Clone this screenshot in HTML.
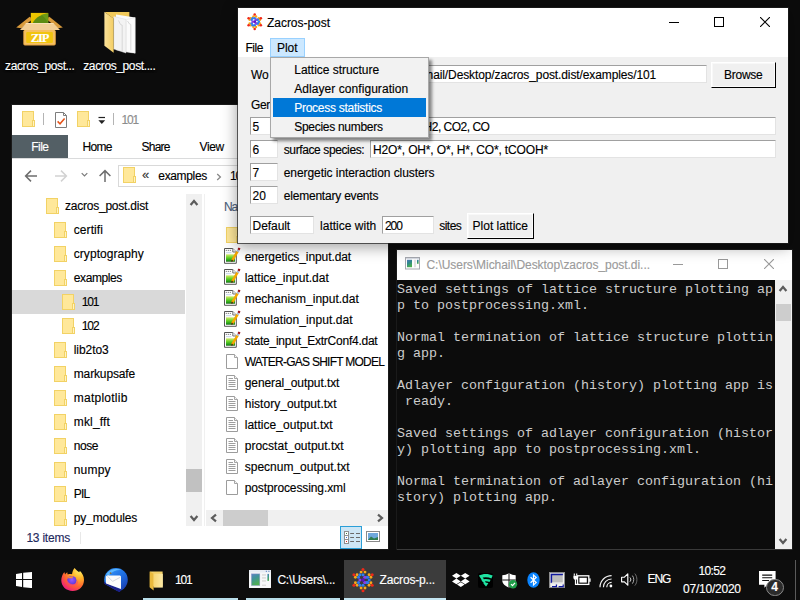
<!DOCTYPE html><html><head><meta charset="utf-8"><title>Zacros-post</title><style>
html,body{margin:0;padding:0}
body{width:800px;height:600px;overflow:hidden;position:relative;background:#0c0c0c;font-family:"Liberation Sans",sans-serif;font-size:12px}
body div,body svg,body span.t{position:absolute}
span.t{white-space:pre;display:block;-webkit-text-stroke:.14px currentColor}
.ent{background:#fff;box-sizing:border-box;border:1px solid;border-color:#a0a0a0 #e3e3e3 #e3e3e3 #a0a0a0}
.btn{background:#f0f0f0;box-sizing:border-box;border:1px solid;border-color:#fff #000 #000 #fff;box-shadow:inset -1px -1px 0 #fbfbfb,inset 1px 1px 0 #f8f8f8}
.con{font-family:"Liberation Mono",monospace;font-size:13.33px;line-height:16px;color:#cccccc;white-space:pre;margin:0}
</style></head><body>
<div id="desktop-icons" style="left:0;top:0">
<svg style="left:16px;top:12px;" width="47" height="35" viewBox="0 0 47 35"><defs><linearGradient id="zc" x1="0" y1="0" x2="1" y2="1"><stop offset="0" stop-color="#f0cc00"/><stop offset="1" stop-color="#e0b400"/></linearGradient></defs><path d="M0.2 15.5L13.6 4.7L16.4 7.2L5.4 16.2Z" fill="#d89a3c"/><path d="M46.8 15.5L33.4 4.7L30.6 7.2L41.6 16.2Z" fill="#d89a3c"/><path d="M13.6 4.7L16.4 7.2H30.6L33.4 4.7L31 10.9H16Z" fill="#c88a30"/><rect x="14.8" y="0.9" width="17.4" height="10.4" fill="url(#zc)"/><path d="M16.6 11.3C19.5 5 26 2.2 32.2 1.3V11.3Z" fill="#5d8c12"/><path d="M25 2.4C28 4.5 30.6 7.6 32.2 11.3V1.2Z" fill="#7aa81a" opacity=".55"/><path d="M10.2 10.9H37.2L44 18H4Z" fill="#f3cf96"/><path d="M10.2 10.9H37.2L38 11.8H9.4Z" fill="#fbe6c0"/><rect x="7.3" y="18" width="32.5" height="15.4" rx="1.6" fill="#e7a544"/><rect x="8.2" y="18" width="30.7" height="14.4" rx="1.2" fill="#f5c060"/><rect x="10.2" y="20" width="26.7" height="11" rx="1.2" fill="#f1c40f"/></svg>
<span class="t" style="left:30.80px;top:31px;font-size:12.5px;line-height:14px;color:#fff;font-family:'Liberation Serif', serif;font-weight:bold;letter-spacing:-1.148px;">ZIP</span>
<span class="t" style="left:5.00px;top:59px;font-size:12px;line-height:14px;color:#fff;letter-spacing:-0.372px;text-shadow:0 1px 2px #000,0 0 3px #000;">zacros_post...</span>
<svg style="left:103.8px;top:11.2px;" width="32" height="43" viewBox="0 0 32 43"><defs><linearGradient id="fy" x1="0" y1="0" x2="1" y2="0"><stop offset="0" stop-color="#fbe29a"/><stop offset="1" stop-color="#f3cd62"/></linearGradient></defs><path d="M0.4 0.9H25.4V6L9.4 7.5Z" fill="#f1c95a"/><path d="M12 3.6L31.2 6.6V42.2L12 39Z" fill="#fafafa"/><path d="M9.8 5.5L22 8.5V42L9.8 38Z" fill="#f3f3f3" stroke="#d8d8d8" stroke-width=".5"/><path d="M22.4 8.6L31.2 6.6V42.2L22.4 41Z" fill="#fbfbfb" stroke="#dcdcdc" stroke-width=".4"/><path d="M14.5 9.5L16.5 13.5L18.2 14.2V40" fill="none" stroke="#cfcfcf" stroke-width=".8"/><path d="M23.5 10L25.5 13L26.8 13.5V39.5" fill="none" stroke="#d0d0d0" stroke-width=".8"/><path d="M0.4 0.9L9.6 7.6V41.8L0.4 34.7Z" fill="url(#fy)"/></svg>
<span class="t" style="left:83.25px;top:59px;font-size:12px;line-height:14px;color:#fff;letter-spacing:-0.386px;text-shadow:0 1px 2px #000,0 0 3px #000;">zacros_post....</span>
</div>
<div id="explorer-window" style="left:0;top:0">
<div style="left:12px;top:105px;width:376px;height:444px;background:#fff;box-shadow:0 0 0 1px #1a1a1a"></div>
<svg style="left:22px;top:111px;" width="13" height="16" viewBox="0 0 13 16"><rect x=".5" y=".5" width="11" height="15" fill="#ffe89a" stroke="#f2d265"/><rect x="10.5" y="9.5" width="2" height="6" fill="#fff3c4" stroke="#f2d265"/></svg>
<div style="left:43px;top:113px;width:1px;height:12px;background:#b4b4b4"></div>
<svg style="left:55px;top:112px;" width="13" height="16" viewBox="0 0 13 16"><path d="M.5 .5H8.5L11.5 3.5V15.5H.5Z" fill="#fff" stroke="#7d7d7d"/><path d="M8.5 .5V3.5H11.5" fill="none" stroke="#7d7d7d"/><path d="M2.6 9.4L5 11.8L9.6 6.4" fill="none" stroke="#e5531a" stroke-width="1.5"/></svg>
<svg style="left:77px;top:111px;" width="13" height="16" viewBox="0 0 13 16"><rect x=".5" y=".5" width="11" height="15" fill="#ffe89a" stroke="#f2d265"/><rect x="10.5" y="9.5" width="2" height="6" fill="#fff3c4" stroke="#f2d265"/></svg>
<svg style="left:98px;top:116px;" width="8" height="9" viewBox="0 0 8 9"><path d="M.5 1.5H7" stroke="#222" stroke-width="1.2"/><path d="M.4 4.2H7.2L3.8 8Z" fill="#222"/></svg>
<div style="left:113px;top:113px;width:1px;height:12px;background:#b4b4b4"></div>
<span class="t" style="left:121.40px;top:113px;font-size:12px;line-height:14px;color:#8c8c8c;letter-spacing:-1.077px;">101</span>
<div style="left:12px;top:135px;width:56px;height:23px;background:#535f65"></div>
<span class="t" style="left:31.30px;top:140px;font-size:12px;line-height:14px;color:#fff;letter-spacing:-0.536px;">File</span>
<span class="t" style="left:82.50px;top:140px;font-size:12px;line-height:14px;color:#000;letter-spacing:-0.654px;">Home</span>
<span class="t" style="left:141.50px;top:140px;font-size:12px;line-height:14px;color:#000;letter-spacing:-0.766px;">Share</span>
<span class="t" style="left:199.50px;top:140px;font-size:12px;line-height:14px;color:#000;letter-spacing:-0.349px;">View</span>
<div style="left:12px;top:158px;width:376px;height:1px;background:#dadbdc"></div>
<svg style="left:24px;top:169px;" width="14" height="14" viewBox="0 0 14 14"><path d="M13 7H1.8M7 1.6L1.6 7L7 12.4" fill="none" stroke="#6d6d6d" stroke-width="1.5"/></svg>
<svg style="left:54px;top:169px;" width="14" height="14" viewBox="0 0 14 14"><path d="M1 7H12.2M7 1.6L12.4 7L7 12.4" fill="none" stroke="#d2d2d2" stroke-width="1.5"/></svg>
<svg style="left:81px;top:172px;" width="7" height="6" viewBox="0 0 7 6"><path d="M.7 1.2L3.5 4L6.3 1.2" fill="none" stroke="#7a7a7a" stroke-width="1.2"/></svg>
<svg style="left:98px;top:169px;" width="14" height="14" viewBox="0 0 14 14"><path d="M7 13V1.8M1.6 7L7 1.6L12.4 7" fill="none" stroke="#6d6d6d" stroke-width="1.5"/></svg>
<div style="left:118px;top:165px;width:260px;height:22px;box-sizing:border-box;border:1px solid #d9d9d9;background:#fff"></div>
<svg style="left:123px;top:167px;" width="13" height="16" viewBox="0 0 13 16"><rect x=".5" y=".5" width="11" height="15" fill="#ffe89a" stroke="#f2d265"/><rect x="10.5" y="9.5" width="2" height="6" fill="#fff3c4" stroke="#f2d265"/></svg>
<span class="t" style="left:142.00px;top:167px;font-size:13px;line-height:15px;color:#333;">«</span>
<span class="t" style="left:158.30px;top:169px;font-size:12px;line-height:14px;color:#000;letter-spacing:-0.345px;">examples</span>
<svg style="left:215.5px;top:172.5px;" width="6" height="8" viewBox="0 0 6 8"><path d="M1.2 1L4.4 4L1.2 7" fill="none" stroke="#888" stroke-width="1.3"/></svg>
<span class="t" style="left:229.90px;top:169px;font-size:12px;line-height:14px;color:#000;letter-spacing:-1.077px;">101</span>
<div style="left:12px;top:290px;width:173px;height:24px;background:#d9d9d9"></div>
<svg style="left:46px;top:198px;" width="13" height="16" viewBox="0 0 13 16"><rect x=".5" y=".5" width="11" height="15" fill="#ffe89a" stroke="#f2d265"/><rect x="10.5" y="9.5" width="2" height="6" fill="#fff3c4" stroke="#f2d265"/></svg>
<span class="t" style="left:65.00px;top:199px;font-size:12px;line-height:14px;color:#000;letter-spacing:-0.232px;">zacros_post.dist</span>
<svg style="left:54px;top:222px;" width="13" height="16" viewBox="0 0 13 16"><rect x=".5" y=".5" width="11" height="15" fill="#ffe89a" stroke="#f2d265"/><rect x="10.5" y="9.5" width="2" height="6" fill="#fff3c4" stroke="#f2d265"/></svg>
<span class="t" style="left:73.75px;top:223px;font-size:12px;line-height:14px;color:#000;letter-spacing:0.090px;">certifi</span>
<svg style="left:54px;top:246px;" width="13" height="16" viewBox="0 0 13 16"><rect x=".5" y=".5" width="11" height="15" fill="#ffe89a" stroke="#f2d265"/><rect x="10.5" y="9.5" width="2" height="6" fill="#fff3c4" stroke="#f2d265"/></svg>
<span class="t" style="left:73.75px;top:247px;font-size:12px;line-height:14px;color:#000;letter-spacing:0.052px;">cryptography</span>
<svg style="left:54px;top:270px;" width="13" height="16" viewBox="0 0 13 16"><rect x=".5" y=".5" width="11" height="15" fill="#ffe89a" stroke="#f2d265"/><rect x="10.5" y="9.5" width="2" height="6" fill="#fff3c4" stroke="#f2d265"/></svg>
<span class="t" style="left:73.75px;top:271px;font-size:12px;line-height:14px;color:#000;letter-spacing:-0.395px;">examples</span>
<svg style="left:62px;top:294px;" width="13" height="16" viewBox="0 0 13 16"><rect x=".5" y=".5" width="11" height="15" fill="#ffe89a" stroke="#f2d265"/><rect x="10.5" y="9.5" width="2" height="6" fill="#fff3c4" stroke="#f2d265"/></svg>
<span class="t" style="left:81.75px;top:295px;font-size:12px;line-height:14px;color:#000;letter-spacing:-1.210px;">101</span>
<svg style="left:62px;top:318px;" width="13" height="16" viewBox="0 0 13 16"><rect x=".5" y=".5" width="11" height="15" fill="#ffe89a" stroke="#f2d265"/><rect x="10.5" y="9.5" width="2" height="6" fill="#fff3c4" stroke="#f2d265"/></svg>
<span class="t" style="left:81.75px;top:319px;font-size:12px;line-height:14px;color:#000;letter-spacing:-1.077px;">102</span>
<svg style="left:54px;top:342px;" width="13" height="16" viewBox="0 0 13 16"><rect x=".5" y=".5" width="11" height="15" fill="#ffe89a" stroke="#f2d265"/><rect x="10.5" y="9.5" width="2" height="6" fill="#fff3c4" stroke="#f2d265"/></svg>
<span class="t" style="left:73.75px;top:343px;font-size:12px;line-height:14px;color:#000;letter-spacing:-0.054px;">lib2to3</span>
<svg style="left:54px;top:366px;" width="13" height="16" viewBox="0 0 13 16"><rect x=".5" y=".5" width="11" height="15" fill="#ffe89a" stroke="#f2d265"/><rect x="10.5" y="9.5" width="2" height="6" fill="#fff3c4" stroke="#f2d265"/></svg>
<span class="t" style="left:73.75px;top:367px;font-size:12px;line-height:14px;color:#000;letter-spacing:-0.140px;">markupsafe</span>
<svg style="left:54px;top:390px;" width="13" height="16" viewBox="0 0 13 16"><rect x=".5" y=".5" width="11" height="15" fill="#ffe89a" stroke="#f2d265"/><rect x="10.5" y="9.5" width="2" height="6" fill="#fff3c4" stroke="#f2d265"/></svg>
<span class="t" style="left:73.75px;top:391px;font-size:12px;line-height:14px;color:#000;letter-spacing:0.244px;">matplotlib</span>
<svg style="left:54px;top:414px;" width="13" height="16" viewBox="0 0 13 16"><rect x=".5" y=".5" width="11" height="15" fill="#ffe89a" stroke="#f2d265"/><rect x="10.5" y="9.5" width="2" height="6" fill="#fff3c4" stroke="#f2d265"/></svg>
<span class="t" style="left:73.75px;top:415px;font-size:12px;line-height:14px;color:#000;letter-spacing:0.168px;">mkl_fft</span>
<svg style="left:54px;top:438px;" width="13" height="16" viewBox="0 0 13 16"><rect x=".5" y=".5" width="11" height="15" fill="#ffe89a" stroke="#f2d265"/><rect x="10.5" y="9.5" width="2" height="6" fill="#fff3c4" stroke="#f2d265"/></svg>
<span class="t" style="left:73.75px;top:439px;font-size:12px;line-height:14px;color:#000;letter-spacing:-0.433px;">nose</span>
<svg style="left:54px;top:462px;" width="13" height="16" viewBox="0 0 13 16"><rect x=".5" y=".5" width="11" height="15" fill="#ffe89a" stroke="#f2d265"/><rect x="10.5" y="9.5" width="2" height="6" fill="#fff3c4" stroke="#f2d265"/></svg>
<span class="t" style="left:73.75px;top:463px;font-size:12px;line-height:14px;color:#000;letter-spacing:0.194px;">numpy</span>
<svg style="left:54px;top:486px;" width="13" height="16" viewBox="0 0 13 16"><rect x=".5" y=".5" width="11" height="15" fill="#ffe89a" stroke="#f2d265"/><rect x="10.5" y="9.5" width="2" height="6" fill="#fff3c4" stroke="#f2d265"/></svg>
<span class="t" style="left:73.75px;top:487px;font-size:12px;line-height:14px;color:#000;letter-spacing:-0.805px;">PIL</span>
<svg style="left:54px;top:510px;" width="13" height="16" viewBox="0 0 13 16"><rect x=".5" y=".5" width="11" height="15" fill="#ffe89a" stroke="#f2d265"/><rect x="10.5" y="9.5" width="2" height="6" fill="#fff3c4" stroke="#f2d265"/></svg>
<span class="t" style="left:73.75px;top:511px;font-size:12px;line-height:14px;color:#000;letter-spacing:-0.132px;">py_modules</span>
<div style="left:186px;top:194px;width:16px;height:332px;background:#f0f0f0"></div>
<svg style="left:187.8px;top:197px;" width="12" height="12" viewBox="-6 -6 12 12"><path d="M-3.4 2.0L0 -2.0L3.4 2.0" fill="none" stroke="#5c5c5c" stroke-width="2.2"/></svg>
<svg style="left:187.6px;top:511.5px;" width="12" height="12" viewBox="-6 -6 12 12"><path d="M-3.4 -2.0L0 2.0L3.4 -2.0" fill="none" stroke="#5c5c5c" stroke-width="2.2"/></svg>
<div style="left:186px;top:469px;width:16px;height:23px;background:#c1c1c1"></div>
<div style="left:204px;top:194px;width:1px;height:332px;background:#f0f0f0"></div>
<span class="t" style="left:224.00px;top:200px;font-size:12px;line-height:14px;color:#4c607a;letter-spacing:-1.072px;">Na</span>
<svg style="left:226px;top:227px;" width="13" height="16" viewBox="0 0 13 16"><rect x=".5" y=".5" width="11" height="15" fill="#ffe89a" stroke="#f2d265"/><rect x="10.5" y="9.5" width="2" height="6" fill="#fff3c4" stroke="#f2d265"/></svg>
<svg style="left:224px;top:248.0px;overflow:visible;" width="17" height="16" viewBox="0 0 17 16"><defs><linearGradient id="dg248" x1="0" y1="0" x2="0" y2="1"><stop offset="0" stop-color="#d4ea70"/><stop offset=".45" stop-color="#66d226"/><stop offset=".85" stop-color="#22981a"/><stop offset="1" stop-color="#14600e"/></linearGradient></defs><path d="M.5 .5H8.8L12.3 4V15.3H.5Z" fill="#fff" stroke="#555"/><path d="M8.8 .5V4H12.3" fill="#f2f2f2" stroke="#666" stroke-width=".9"/><circle cx="2.3" cy="2.3" r=".6" fill="#666"/><circle cx="4.3" cy="2.3" r=".6" fill="#666"/><circle cx="6.3" cy="2.3" r=".6" fill="#666"/><path d="M2 4.7H7.4" stroke="#bcd0e4" stroke-width=".9"/><rect x="2" y="6.3" width="9" height="7.4" fill="url(#dg248)"/><path d="M8.3 12.3L13.6 3.4" stroke="#f5a800" stroke-width="2.5"/><path d="M7.5 13.6L8.5 11.9" stroke="#5a3a14" stroke-width="1.6"/><path d="M13.5 3.6L14.4 2.1" stroke="#a8bcd6" stroke-width="2.4"/><rect x="13.9" y="-.2" width="2.2" height="2.2" fill="#9c0c14" transform="rotate(30 15 .9)"/></svg>
<span class="t" style="left:244.70px;top:250px;font-size:12px;line-height:14px;color:#000;letter-spacing:-0.084px;">energetics_input.dat</span>
<svg style="left:224px;top:269.0px;overflow:visible;" width="17" height="16" viewBox="0 0 17 16"><defs><linearGradient id="dg269" x1="0" y1="0" x2="0" y2="1"><stop offset="0" stop-color="#d4ea70"/><stop offset=".45" stop-color="#66d226"/><stop offset=".85" stop-color="#22981a"/><stop offset="1" stop-color="#14600e"/></linearGradient></defs><path d="M.5 .5H8.8L12.3 4V15.3H.5Z" fill="#fff" stroke="#555"/><path d="M8.8 .5V4H12.3" fill="#f2f2f2" stroke="#666" stroke-width=".9"/><circle cx="2.3" cy="2.3" r=".6" fill="#666"/><circle cx="4.3" cy="2.3" r=".6" fill="#666"/><circle cx="6.3" cy="2.3" r=".6" fill="#666"/><path d="M2 4.7H7.4" stroke="#bcd0e4" stroke-width=".9"/><rect x="2" y="6.3" width="9" height="7.4" fill="url(#dg269)"/><path d="M8.3 12.3L13.6 3.4" stroke="#f5a800" stroke-width="2.5"/><path d="M7.5 13.6L8.5 11.9" stroke="#5a3a14" stroke-width="1.6"/><path d="M13.5 3.6L14.4 2.1" stroke="#a8bcd6" stroke-width="2.4"/><rect x="13.9" y="-.2" width="2.2" height="2.2" fill="#9c0c14" transform="rotate(30 15 .9)"/></svg>
<span class="t" style="left:244.70px;top:271px;font-size:12px;line-height:14px;color:#000;">lattice_input.dat</span>
<svg style="left:224px;top:290.0px;overflow:visible;" width="17" height="16" viewBox="0 0 17 16"><defs><linearGradient id="dg290" x1="0" y1="0" x2="0" y2="1"><stop offset="0" stop-color="#d4ea70"/><stop offset=".45" stop-color="#66d226"/><stop offset=".85" stop-color="#22981a"/><stop offset="1" stop-color="#14600e"/></linearGradient></defs><path d="M.5 .5H8.8L12.3 4V15.3H.5Z" fill="#fff" stroke="#555"/><path d="M8.8 .5V4H12.3" fill="#f2f2f2" stroke="#666" stroke-width=".9"/><circle cx="2.3" cy="2.3" r=".6" fill="#666"/><circle cx="4.3" cy="2.3" r=".6" fill="#666"/><circle cx="6.3" cy="2.3" r=".6" fill="#666"/><path d="M2 4.7H7.4" stroke="#bcd0e4" stroke-width=".9"/><rect x="2" y="6.3" width="9" height="7.4" fill="url(#dg290)"/><path d="M8.3 12.3L13.6 3.4" stroke="#f5a800" stroke-width="2.5"/><path d="M7.5 13.6L8.5 11.9" stroke="#5a3a14" stroke-width="1.6"/><path d="M13.5 3.6L14.4 2.1" stroke="#a8bcd6" stroke-width="2.4"/><rect x="13.9" y="-.2" width="2.2" height="2.2" fill="#9c0c14" transform="rotate(30 15 .9)"/></svg>
<span class="t" style="left:244.70px;top:292px;font-size:12px;line-height:14px;color:#000;">mechanism_input.dat</span>
<svg style="left:224px;top:311.0px;overflow:visible;" width="17" height="16" viewBox="0 0 17 16"><defs><linearGradient id="dg311" x1="0" y1="0" x2="0" y2="1"><stop offset="0" stop-color="#d4ea70"/><stop offset=".45" stop-color="#66d226"/><stop offset=".85" stop-color="#22981a"/><stop offset="1" stop-color="#14600e"/></linearGradient></defs><path d="M.5 .5H8.8L12.3 4V15.3H.5Z" fill="#fff" stroke="#555"/><path d="M8.8 .5V4H12.3" fill="#f2f2f2" stroke="#666" stroke-width=".9"/><circle cx="2.3" cy="2.3" r=".6" fill="#666"/><circle cx="4.3" cy="2.3" r=".6" fill="#666"/><circle cx="6.3" cy="2.3" r=".6" fill="#666"/><path d="M2 4.7H7.4" stroke="#bcd0e4" stroke-width=".9"/><rect x="2" y="6.3" width="9" height="7.4" fill="url(#dg311)"/><path d="M8.3 12.3L13.6 3.4" stroke="#f5a800" stroke-width="2.5"/><path d="M7.5 13.6L8.5 11.9" stroke="#5a3a14" stroke-width="1.6"/><path d="M13.5 3.6L14.4 2.1" stroke="#a8bcd6" stroke-width="2.4"/><rect x="13.9" y="-.2" width="2.2" height="2.2" fill="#9c0c14" transform="rotate(30 15 .9)"/></svg>
<span class="t" style="left:244.70px;top:313px;font-size:12px;line-height:14px;color:#000;letter-spacing:0.063px;">simulation_input.dat</span>
<svg style="left:224px;top:332.0px;overflow:visible;" width="17" height="16" viewBox="0 0 17 16"><defs><linearGradient id="dg332" x1="0" y1="0" x2="0" y2="1"><stop offset="0" stop-color="#d4ea70"/><stop offset=".45" stop-color="#66d226"/><stop offset=".85" stop-color="#22981a"/><stop offset="1" stop-color="#14600e"/></linearGradient></defs><path d="M.5 .5H8.8L12.3 4V15.3H.5Z" fill="#fff" stroke="#555"/><path d="M8.8 .5V4H12.3" fill="#f2f2f2" stroke="#666" stroke-width=".9"/><circle cx="2.3" cy="2.3" r=".6" fill="#666"/><circle cx="4.3" cy="2.3" r=".6" fill="#666"/><circle cx="6.3" cy="2.3" r=".6" fill="#666"/><path d="M2 4.7H7.4" stroke="#bcd0e4" stroke-width=".9"/><rect x="2" y="6.3" width="9" height="7.4" fill="url(#dg332)"/><path d="M8.3 12.3L13.6 3.4" stroke="#f5a800" stroke-width="2.5"/><path d="M7.5 13.6L8.5 11.9" stroke="#5a3a14" stroke-width="1.6"/><path d="M13.5 3.6L14.4 2.1" stroke="#a8bcd6" stroke-width="2.4"/><rect x="13.9" y="-.2" width="2.2" height="2.2" fill="#9c0c14" transform="rotate(30 15 .9)"/></svg>
<span class="t" style="left:244.70px;top:334px;font-size:12px;line-height:14px;color:#000;letter-spacing:-0.239px;">state_input_ExtrConf4.dat</span>
<svg style="left:226px;top:354.0px;" width="12" height="15" viewBox="0 0 12 15"><path d="M.5 .5H8.5L11.5 3.5V14.5H.5Z" fill="#fff" stroke="#9c9c9c"/><path d="M8.5 .5V3.5H11.5" fill="#f4f4f4" stroke="#9c9c9c" stroke-width=".9"/></svg>
<span class="t" style="left:244.70px;top:355px;font-size:12px;line-height:14px;color:#000;letter-spacing:-0.744px;">WATER-GAS SHIFT MODEL</span>
<svg style="left:226px;top:375.0px;" width="12" height="15" viewBox="0 0 12 15"><path d="M.5 .5H8.5L11.5 3.5V14.5H.5Z" fill="#fff" stroke="#9c9c9c"/><path d="M8.5 .5V3.5H11.5" fill="#f4f4f4" stroke="#9c9c9c" stroke-width=".9"/><path d="M2.5 3.5H7" stroke="#9e9e9e" stroke-width="1"/><path d="M2.5 5.5H9.5" stroke="#9e9e9e" stroke-width="1"/><path d="M2.5 7.5H9.5" stroke="#9e9e9e" stroke-width="1"/><path d="M2.5 9.5H9.5" stroke="#9e9e9e" stroke-width="1"/><path d="M2.5 11.5H9.5" stroke="#9e9e9e" stroke-width="1"/></svg>
<span class="t" style="left:244.70px;top:376px;font-size:12px;line-height:14px;color:#000;letter-spacing:-0.077px;">general_output.txt</span>
<svg style="left:226px;top:396.0px;" width="12" height="15" viewBox="0 0 12 15"><path d="M.5 .5H8.5L11.5 3.5V14.5H.5Z" fill="#fff" stroke="#9c9c9c"/><path d="M8.5 .5V3.5H11.5" fill="#f4f4f4" stroke="#9c9c9c" stroke-width=".9"/><path d="M2.5 3.5H7" stroke="#9e9e9e" stroke-width="1"/><path d="M2.5 5.5H9.5" stroke="#9e9e9e" stroke-width="1"/><path d="M2.5 7.5H9.5" stroke="#9e9e9e" stroke-width="1"/><path d="M2.5 9.5H9.5" stroke="#9e9e9e" stroke-width="1"/><path d="M2.5 11.5H9.5" stroke="#9e9e9e" stroke-width="1"/></svg>
<span class="t" style="left:244.70px;top:397px;font-size:12px;line-height:14px;color:#000;letter-spacing:0.023px;">history_output.txt</span>
<svg style="left:226px;top:417.0px;" width="12" height="15" viewBox="0 0 12 15"><path d="M.5 .5H8.5L11.5 3.5V14.5H.5Z" fill="#fff" stroke="#9c9c9c"/><path d="M8.5 .5V3.5H11.5" fill="#f4f4f4" stroke="#9c9c9c" stroke-width=".9"/><path d="M2.5 3.5H7" stroke="#9e9e9e" stroke-width="1"/><path d="M2.5 5.5H9.5" stroke="#9e9e9e" stroke-width="1"/><path d="M2.5 7.5H9.5" stroke="#9e9e9e" stroke-width="1"/><path d="M2.5 9.5H9.5" stroke="#9e9e9e" stroke-width="1"/><path d="M2.5 11.5H9.5" stroke="#9e9e9e" stroke-width="1"/></svg>
<span class="t" style="left:244.70px;top:418px;font-size:12px;line-height:14px;color:#000;letter-spacing:0.034px;">lattice_output.txt</span>
<svg style="left:226px;top:438.0px;" width="12" height="15" viewBox="0 0 12 15"><path d="M.5 .5H8.5L11.5 3.5V14.5H.5Z" fill="#fff" stroke="#9c9c9c"/><path d="M8.5 .5V3.5H11.5" fill="#f4f4f4" stroke="#9c9c9c" stroke-width=".9"/><path d="M2.5 3.5H7" stroke="#9e9e9e" stroke-width="1"/><path d="M2.5 5.5H9.5" stroke="#9e9e9e" stroke-width="1"/><path d="M2.5 7.5H9.5" stroke="#9e9e9e" stroke-width="1"/><path d="M2.5 9.5H9.5" stroke="#9e9e9e" stroke-width="1"/><path d="M2.5 11.5H9.5" stroke="#9e9e9e" stroke-width="1"/></svg>
<span class="t" style="left:244.70px;top:439px;font-size:12px;line-height:14px;color:#000;letter-spacing:0.014px;">procstat_output.txt</span>
<svg style="left:226px;top:459.0px;" width="12" height="15" viewBox="0 0 12 15"><path d="M.5 .5H8.5L11.5 3.5V14.5H.5Z" fill="#fff" stroke="#9c9c9c"/><path d="M8.5 .5V3.5H11.5" fill="#f4f4f4" stroke="#9c9c9c" stroke-width=".9"/><path d="M2.5 3.5H7" stroke="#9e9e9e" stroke-width="1"/><path d="M2.5 5.5H9.5" stroke="#9e9e9e" stroke-width="1"/><path d="M2.5 7.5H9.5" stroke="#9e9e9e" stroke-width="1"/><path d="M2.5 9.5H9.5" stroke="#9e9e9e" stroke-width="1"/><path d="M2.5 11.5H9.5" stroke="#9e9e9e" stroke-width="1"/></svg>
<span class="t" style="left:244.70px;top:460px;font-size:12px;line-height:14px;color:#000;letter-spacing:0.009px;">specnum_output.txt</span>
<svg style="left:226px;top:480.0px;" width="12" height="15" viewBox="0 0 12 15"><path d="M.5 .5H8.5L11.5 3.5V14.5H.5Z" fill="#fff" stroke="#9c9c9c"/><path d="M8.5 .5V3.5H11.5" fill="#f4f4f4" stroke="#9c9c9c" stroke-width=".9"/></svg>
<span class="t" style="left:244.70px;top:481px;font-size:12px;line-height:14px;color:#000;letter-spacing:-0.107px;">postprocessing.xml</span>
<div style="left:206px;top:510px;width:182px;height:16px;background:#f0f0f0"></div>
<svg style="left:208px;top:511.79999999999995px;" width="12" height="12" viewBox="-6 -6 12 12"><path d="M2.0 -3.4L-2.0 0L2.0 3.4" fill="none" stroke="#5c5c5c" stroke-width="2.2"/></svg>
<svg style="left:374px;top:511.79999999999995px;" width="12" height="12" viewBox="-6 -6 12 12"><path d="M-2.0 -3.4L2.0 0L-2.0 3.4" fill="none" stroke="#5c5c5c" stroke-width="2.2"/></svg>
<div style="left:223px;top:510px;width:45px;height:16px;background:#cdcdcd"></div>
<span class="t" style="left:26.40px;top:531px;font-size:12px;line-height:14px;color:#1f2a5e;letter-spacing:-0.220px;">13 items</span>
<div style="left:80px;top:532px;width:1px;height:12px;background:#e8e8e8"></div>
<div style="left:340px;top:526px;width:22px;height:23px;box-sizing:border-box;background:#cde6f5;border:1px solid #2a9fd8"></div>
<svg style="left:344px;top:531px;" width="16.5" height="13" viewBox="0 0 16.5 13"><rect x=".5" y=".5" width="4" height="12" fill="#fff" stroke="#8f8f8f"/><path d="M.5 4.5H4.5M.5 8.5H4.5" stroke="#8f8f8f"/><rect x="2" y="2.0" width="1" height="1" fill="#3a7d44"/><path d="M6.2 2.5H10M12 2.5H16" stroke="#6a6a6a" stroke-width="1.1"/><rect x="2" y="6.0" width="1" height="1" fill="#3a6fd8"/><path d="M6.2 6.5H10M12 6.5H16" stroke="#6a6a6a" stroke-width="1.1"/><rect x="2" y="10.0" width="1" height="1" fill="#d82a20"/><path d="M6.2 10.5H10M12 10.5H16" stroke="#6a6a6a" stroke-width="1.1"/></svg>
<svg style="left:366px;top:531px;" width="14" height="11" viewBox="0 0 14 11"><rect x=".5" y=".5" width="13" height="10" fill="#fff" stroke="#8a8a8a"/><rect x="2" y="2" width="10" height="7" fill="#6fa8dc"/><path d="M2 9L5 5.5L8 7.5L12 6V9Z" fill="#2e7d4f"/></svg>
</div>
<div id="console-window" style="left:0;top:0">
<div style="left:397px;top:250px;width:395px;height:299px;background:#0c0c0c;box-shadow:0 0 0 1px #1a1a1a"></div>
<div style="left:397px;top:549px;width:395px;height:1px;background:#3a3a3a"></div>
<div style="left:397px;top:250px;width:395px;height:30px;background:#fff"></div>
<svg style="left:405px;top:257.3px;" width="15" height="12.5" viewBox="0 0 15 12.5"><defs><linearGradient id="gs" x1="0" y1="0" x2="0.4" y2="1"><stop offset="0" stop-color="#4f78bd"/><stop offset="0.5" stop-color="#2f8a8c"/><stop offset="1" stop-color="#4aae4e"/></linearGradient></defs><rect x=".5" y=".5" width="14" height="11.5" fill="#fdfdfd" stroke="#a6a9b0"/><rect x="1" y="1" width="13" height="1" fill="#d7dbe3"/><rect x="2" y="2.8" width="5" height="7.4" fill="url(#gs)"/><rect x="9" y="2.8" width="2" height="7.4" fill="#e2e2e2"/><rect x="12" y="2.8" width="1.6" height="4" fill="url(#gs)"/></svg>
<span class="t" style="left:426.50px;top:258px;font-size:12px;line-height:14px;color:#9b9b9b;letter-spacing:-0.046px;">C:\Users\Michail\Desktop\zacros_post.di...</span>
<div style="left:673px;top:264px;width:10px;height:1px;background:#999"></div>
<div style="left:718px;top:259px;width:10px;height:10px;box-sizing:border-box;border:1px solid #999"></div>
<svg style="left:764px;top:259px;" width="10" height="10" viewBox="0 0 10 10"><path d="M0 0L10 10M10 0L0 10" stroke="#999" stroke-width="1.1"/></svg>
<div class="con" style="left:397px;top:282px;width:376px;height:260px">Saved settings of lattice structure plotting ap
p to postprocessing.xml.

Normal termination of lattice structure plottin
g app.

Adlayer configuration (history) plotting app is
 ready.

Saved settings of adlayer configuration (histor
y) plotting app to postprocessing.xml.

Normal termination of adlayer configuration (hi
story) plotting app.</div>
<div style="left:775px;top:280px;width:17px;height:269px;background:#f0f0f0"></div>
<svg style="left:777.4px;top:283.2px;" width="12" height="12" viewBox="-6 -6 12 12"><path d="M-3.4 2.0L0 -2.0L3.4 2.0" fill="none" stroke="#5c5c5c" stroke-width="2.2"/></svg>
<svg style="left:777.4px;top:534.8px;" width="12" height="12" viewBox="-6 -6 12 12"><path d="M-3.4 -2.0L0 2.0L3.4 -2.0" fill="none" stroke="#5c5c5c" stroke-width="2.2"/></svg>
<div style="left:776px;top:304px;width:15px;height:17px;background:#cdcdcd"></div>
</div>
<div id="zacros-window" style="left:0;top:0">
<div style="left:238px;top:8px;width:550px;height:235px;background:#f0f0f0;box-shadow:0 0 0 1px rgba(30,30,30,.7),0 3px 14px 1px rgba(0,0,0,.38)"></div>
<div style="left:238px;top:8px;width:550px;height:49px;background:#fff"></div>
<svg style="left:245.69px;top:13.489999999999998px;" width="17.42" height="17.42" viewBox="-8.71 -8.71 17.42 17.42"><circle cx="-1.27" cy="-5.29" r="1.21" fill="#f8a81a"/><circle cx="1.34" cy="-5.29" r="1.21" fill="#f8a81a"/><circle cx="-1.27" cy="5.36" r="1.21" fill="#f8a81a"/><circle cx="1.34" cy="5.36" r="1.21" fill="#f8a81a"/><circle cx="4.09" cy="-3.48" r="1.21" fill="#f8a81a"/><circle cx="5.29" cy="-1.88" r="1.21" fill="#f8a81a"/><circle cx="-3.95" cy="-3.48" r="1.21" fill="#f8a81a"/><circle cx="-5.09" cy="-1.88" r="1.21" fill="#f8a81a"/><circle cx="4.09" cy="3.55" r="1.21" fill="#f8a81a"/><circle cx="5.29" cy="1.81" r="1.21" fill="#f8a81a"/><circle cx="-3.95" cy="3.55" r="1.21" fill="#f8a81a"/><circle cx="-5.09" cy="1.81" r="1.21" fill="#f8a81a"/><circle cx="0.00" cy="-7.10" r="1.26" fill="#f02818"/><circle cx="0.00" cy="7.24" r="1.26" fill="#f02818"/><circle cx="-6.10" cy="-3.48" r="1.26" fill="#f02818"/><circle cx="6.16" cy="-3.48" r="1.26" fill="#f02818"/><circle cx="-6.10" cy="3.55" r="1.26" fill="#f02818"/><circle cx="6.16" cy="3.55" r="1.26" fill="#f02818"/><circle cx="-2.08" cy="-3.48" r="1.26" fill="#2d7df0"/><circle cx="0.00" cy="-3.48" r="1.26" fill="#2d7df0"/><circle cx="-3.02" cy="-1.88" r="1.26" fill="#2d7df0"/><circle cx="3.15" cy="-1.88" r="1.26" fill="#2d7df0"/><circle cx="4.15" cy="0.00" r="1.26" fill="#2d7df0"/><circle cx="3.15" cy="1.74" r="1.26" fill="#2d7df0"/><circle cx="-3.02" cy="1.74" r="1.26" fill="#2d7df0"/><circle cx="-2.08" cy="3.55" r="1.26" fill="#2d7df0"/><circle cx="0.00" cy="3.55" r="1.26" fill="#2d7df0"/><circle cx="2.14" cy="-1.88" r="1.26" fill="#2d7df0"/><circle cx="2.14" cy="1.74" r="1.26" fill="#2d7df0"/><circle cx="1.14" cy="-1.88" r="1.26" fill="#8a3de8"/><circle cx="-2.08" cy="0.00" r="1.26" fill="#8a3de8"/><circle cx="1.14" cy="1.74" r="1.26" fill="#8a3de8"/><circle cx="0" cy="0" r="1.42" fill="#5a12c8"/></svg>
<span class="t" style="left:267.00px;top:16px;font-size:12px;line-height:14px;color:#000;letter-spacing:-0.033px;">Zacros-post</span>
<div style="left:669px;top:22px;width:10px;height:1px;background:#000"></div>
<div style="left:714px;top:17px;width:10px;height:10px;box-sizing:border-box;border:1px solid #000"></div>
<svg style="left:760px;top:17px;" width="10" height="10" viewBox="0 0 10 10"><path d="M0 0L10 10M10 0L0 10" stroke="#000" stroke-width="1.1"/></svg>
<span class="t" style="left:245.50px;top:41px;font-size:12px;line-height:14px;color:#000;letter-spacing:-0.461px;">File</span>
<div style="left:270px;top:38px;width:35px;height:19px;box-sizing:border-box;background:#cce8ff;border:1px solid #99d1ff"></div>
<span class="t" style="left:277.00px;top:41px;font-size:12px;line-height:14px;color:#000;letter-spacing:-0.047px;">Plot</span>
<span class="t" style="left:251.00px;top:68px;font-size:12px;line-height:14px;color:#000;letter-spacing:-0.098px;">Wo</span>
<div class="ent" style="left:352px;top:65px;width:355px;height:18px"></div>
<span class="t" style="left:426.60px;top:68px;font-size:12px;line-height:14px;color:#000;letter-spacing:-0.108px;">hail/Desktop/zacros_post.dist/examples/101</span>
<div class="btn" style="left:711px;top:62px;width:65px;height:26px"></div>
<span class="t" style="left:724.00px;top:68px;font-size:12px;line-height:14px;color:#000;letter-spacing:-0.253px;">Browse</span>
<span class="t" style="left:251.00px;top:98px;font-size:12px;line-height:14px;color:#000;letter-spacing:-0.339px;">Ger</span>
<div class="ent" style="left:250px;top:117px;width:28px;height:18px"></div>
<span class="t" style="left:252.60px;top:120px;font-size:12px;line-height:14px;color:#000;">5</span>
<div class="ent" style="left:250px;top:140px;width:28px;height:18px"></div>
<span class="t" style="left:252.60px;top:143px;font-size:12px;line-height:14px;color:#000;">6</span>
<div class="ent" style="left:250px;top:163px;width:28px;height:18px"></div>
<span class="t" style="left:252.60px;top:166px;font-size:12px;line-height:14px;color:#000;">7</span>
<div class="ent" style="left:250px;top:186px;width:28px;height:18px"></div>
<span class="t" style="left:252.60px;top:189px;font-size:12px;line-height:14px;color:#000;">20</span>
<div class="ent" style="left:370px;top:117px;width:406px;height:18px"></div>
<span class="t" style="left:423.60px;top:120px;font-size:12px;line-height:14px;color:#000;letter-spacing:-0.505px;">H2, CO2, CO</span>
<span class="t" style="left:283.75px;top:143px;font-size:12px;line-height:14px;color:#000;letter-spacing:-0.389px;">surface species:</span>
<div class="ent" style="left:370px;top:140px;width:406px;height:18px"></div>
<span class="t" style="left:373.00px;top:143px;font-size:12px;line-height:14px;color:#000;letter-spacing:-0.146px;">H2O*, OH*, O*, H*, CO*, tCOOH*</span>
<span class="t" style="left:283.75px;top:166px;font-size:12px;line-height:14px;color:#000;letter-spacing:-0.067px;">energetic interaction clusters</span>
<span class="t" style="left:283.75px;top:189px;font-size:12px;line-height:14px;color:#000;letter-spacing:-0.210px;">elementary events</span>
<div class="ent" style="left:250px;top:216px;width:64px;height:18px"></div>
<span class="t" style="left:252.60px;top:219px;font-size:12px;line-height:14px;color:#000;letter-spacing:-0.076px;">Default</span>
<span class="t" style="left:320.00px;top:219px;font-size:12px;line-height:14px;color:#000;letter-spacing:0.018px;">lattice with</span>
<div class="ent" style="left:382px;top:216px;width:52px;height:18px"></div>
<span class="t" style="left:385.00px;top:219px;font-size:12px;line-height:14px;color:#000;letter-spacing:-1.077px;">200</span>
<span class="t" style="left:439.25px;top:219px;font-size:12px;line-height:14px;color:#000;letter-spacing:-0.537px;">sites</span>
<div class="btn" style="left:467px;top:213px;width:67px;height:26px"></div>
<span class="t" style="left:472.50px;top:219px;font-size:12px;line-height:14px;color:#000;letter-spacing:0.012px;">Plot lattice</span>
</div>
<div id="plot-menu" style="left:0;top:0">
<div style="left:270px;top:57px;width:159px;height:81px;box-sizing:border-box;background:#f2f2f2;border:1px solid #a8a8a8;box-shadow:3px 3px 3px rgba(0,0,0,.45)"></div>
<div style="left:273px;top:98px;width:153px;height:19px;background:#0078d7"></div>
<span class="t" style="left:294.25px;top:63px;font-size:12px;line-height:14px;color:#000;letter-spacing:-0.034px;">Lattice structure</span>
<span class="t" style="left:294.25px;top:82px;font-size:12px;line-height:14px;color:#000;letter-spacing:0.060px;">Adlayer configuration</span>
<span class="t" style="left:294.25px;top:101px;font-size:12px;line-height:14px;color:#fff;letter-spacing:-0.275px;">Process statistics</span>
<span class="t" style="left:294.25px;top:120px;font-size:12px;line-height:14px;color:#000;letter-spacing:-0.288px;">Species numbers</span>
</div>
<div id="taskbar" style="left:0;top:0">
<div style="left:0px;top:560px;width:800px;height:40px;background:#0d0d0d"></div>
<svg style="left:15.8px;top:571.8px;" width="16.6" height="16.4" viewBox="0 0 16.6 16.4"><path d="M0 1.9L6 1V6.9H0Z M7.2 .85L16.5 0V6.9H7.2Z M0 8.1H6V15L0 14.1Z M7.2 8.1H16.5V16.2L7.2 15.15Z" fill="#fff"/></svg>
<svg style="left:60.5px;top:568px;" width="23" height="23" viewBox="0 0 23 23"><defs><radialGradient id="ffg" cx=".8" cy=".1" r="1.15"><stop offset="0" stop-color="#fff36b"/><stop offset=".3" stop-color="#ffb52a"/><stop offset=".62" stop-color="#ff6230"/><stop offset=".86" stop-color="#f0207a"/><stop offset="1" stop-color="#c0179e"/></radialGradient><radialGradient id="ffp" cx=".5" cy=".4" r=".7"><stop offset="0" stop-color="#9a5bff"/><stop offset="1" stop-color="#4b2bd0"/></radialGradient></defs><path d="M13.5 0C15.5 2.2 17 3.5 18.2 4.2C18.6 3.8 18.8 3.3 18.8 2.8C21.4 5.2 23 8.4 23 12C23 18.4 18 23 11.6 23C5.2 23 .3 18.4 .3 12.6C.3 9.4 1.4 6.2 3.4 4C3.5 5 3.8 5.8 4.2 6.4C4.6 5.6 5.4 4.6 6.4 4.2C6.2 5 6.4 5.8 6.8 6.4C8.2 5.8 10 5.9 11 6.2C11.4 3.8 12.2 1.6 13.5 0Z" fill="url(#ffg)"/><circle cx="10.8" cy="12.6" r="4.7" fill="url(#ffp)"/><path d="M6.2 10.4C7.5 8.6 10.5 8 12.6 8.4C11.8 9 11.4 9.6 11.6 10.2C9.5 10.4 8.2 10.2 6.2 10.4Z" fill="#ff8a30"/><path d="M5.8 11C5.2 15.5 8.6 18.6 12.4 18.2C16 17.8 17.8 14.6 17 11.4C16.8 13.8 15 16 12 16.2C9 16.4 6.6 14.2 5.8 11Z" fill="#ff4f5e" opacity=".85"/></svg>
<svg style="left:104px;top:568px;" width="24" height="24" viewBox="0 0 24 24"><defs><linearGradient id="tbg" x1="0.1" y1="0" x2="0.9" y2="1"><stop offset="0" stop-color="#3a9cff"/><stop offset=".5" stop-color="#1e6ee0"/><stop offset="1" stop-color="#1a36a8"/></linearGradient><clipPath id="tbc"><path d="M0 0H24V24H15L0 15.6Z"/></clipPath></defs><g clip-path="url(#tbc)"><circle cx="12" cy="11.8" r="11.8" fill="url(#tbg)"/><path d="M2 6.4C5.4 1.4 12 -.6 17.6 2.2C13 1.6 8.4 3.4 5.4 7Z" fill="#5cb8ff"/><path d="M0 14L17 21.4L16 24H0Z" fill="#1a1e86"/></g><path d="M1.8 8.6C2.6 7.6 3.8 7.2 5 7.4L16 7.4L17 8.4V20.9L2 15.5Z" fill="#fbfbfa"/><path d="M3.4 8.2L8.6 13.4L16.4 9.2" fill="none" stroke="#c9ccd6" stroke-width=".8"/><circle cx="6.6" cy="5.2" r=".9" fill="#8a6a3a"/></svg>
<svg style="left:149px;top:571px;" width="15" height="20" viewBox="0 0 15 20"><defs><linearGradient id="tf" x1="0" y1="0" x2="1" y2="0"><stop offset="0" stop-color="#f7d674"/><stop offset="1" stop-color="#fbe9a6"/></linearGradient></defs><path d="M1 .6H13.6V15.4H3.6Z" fill="#f2cf66"/><path d="M.6 .6L4.6 2.8V19.4L.6 16.2Z" fill="#e9b93c"/><path d="M4.6 2.8H13.8V16.6H4.6Z" fill="url(#tf)"/></svg>
<span class="t" style="left:175.00px;top:573px;font-size:12px;line-height:14px;color:#fff;letter-spacing:-1.210px;">101</span>
<div style="left:143px;top:598px;width:94.5px;height:2px;background:#b9deea"></div>
<svg style="left:249px;top:570.3px;" width="22" height="18.2" viewBox="0 0 22 18"><defs><linearGradient id="ag249" x1="0" y1="0" x2="0.4" y2="1"><stop offset="0" stop-color="#5b82c4"/><stop offset="0.45" stop-color="#3f9498"/><stop offset="1" stop-color="#4fae52"/></linearGradient></defs><rect x="0" y="0" width="22" height="18" rx=".6" fill="#f6f7f9"/><rect x="0" y="0" width="22" height="2.4" fill="#e6ebf3"/><rect x="16.8" y=".7" width="1.2" height="1" fill="#5a7ec0"/><rect x="19.3" y=".7" width="1.2" height="1" fill="#5a7ec0"/><rect x="2.4" y="3.8" width="8.4" height="11.6" fill="url(#ag249)" stroke="#8d97c9" stroke-width=".5"/><rect x="13" y="4" width="4" height="1.6" fill="#dcdcdc"/><rect x="13" y="7" width="4" height="1.6" fill="#dcdcdc"/><rect x="13" y="10" width="4" height="1.6" fill="#dcdcdc"/><rect x="13" y="14.6" width="4" height="1" fill="#d0d0d0"/><rect x="18.4" y="3.8" width="1.6" height="7" fill="url(#ag249)"/></svg>
<span class="t" style="left:277.40px;top:573px;font-size:12px;line-height:14px;color:#fff;letter-spacing:-0.185px;">C:\Users\...</span>
<div style="left:246px;top:598px;width:94px;height:2px;background:#b9deea"></div>
<div style="left:344px;top:560px;width:102px;height:40px;background:#3c3c3c"></div>
<div style="left:344px;top:598px;width:102px;height:2px;background:#c4e6f2"></div>
<svg style="left:349.8px;top:566.8px;" width="26.0" height="26.0" viewBox="-13.0 -13.0 26.0 26.0"><circle cx="-1.90" cy="-7.90" r="1.45" fill="#f8a81a"/><circle cx="2.00" cy="-7.90" r="1.45" fill="#f8a81a"/><circle cx="-1.90" cy="8.00" r="1.45" fill="#f8a81a"/><circle cx="2.00" cy="8.00" r="1.45" fill="#f8a81a"/><circle cx="6.10" cy="-5.20" r="1.45" fill="#f8a81a"/><circle cx="7.90" cy="-2.80" r="1.45" fill="#f8a81a"/><circle cx="-5.90" cy="-5.20" r="1.45" fill="#f8a81a"/><circle cx="-7.60" cy="-2.80" r="1.45" fill="#f8a81a"/><circle cx="6.10" cy="5.30" r="1.45" fill="#f8a81a"/><circle cx="7.90" cy="2.70" r="1.45" fill="#f8a81a"/><circle cx="-5.90" cy="5.30" r="1.45" fill="#f8a81a"/><circle cx="-7.60" cy="2.70" r="1.45" fill="#f8a81a"/><circle cx="0.00" cy="-10.60" r="1.50" fill="#f02818"/><circle cx="0.00" cy="10.80" r="1.50" fill="#f02818"/><circle cx="-9.10" cy="-5.20" r="1.50" fill="#f02818"/><circle cx="9.20" cy="-5.20" r="1.50" fill="#f02818"/><circle cx="-9.10" cy="5.30" r="1.50" fill="#f02818"/><circle cx="9.20" cy="5.30" r="1.50" fill="#f02818"/><circle cx="-3.10" cy="-5.20" r="1.50" fill="#2d7df0"/><circle cx="0.00" cy="-5.20" r="1.50" fill="#2d7df0"/><circle cx="-4.50" cy="-2.80" r="1.50" fill="#2d7df0"/><circle cx="4.70" cy="-2.80" r="1.50" fill="#2d7df0"/><circle cx="6.20" cy="0.00" r="1.50" fill="#2d7df0"/><circle cx="4.70" cy="2.60" r="1.50" fill="#2d7df0"/><circle cx="-4.50" cy="2.60" r="1.50" fill="#2d7df0"/><circle cx="-3.10" cy="5.30" r="1.50" fill="#2d7df0"/><circle cx="0.00" cy="5.30" r="1.50" fill="#2d7df0"/><circle cx="3.20" cy="-2.80" r="1.50" fill="#2d7df0"/><circle cx="3.20" cy="2.60" r="1.50" fill="#2d7df0"/><circle cx="1.70" cy="-2.80" r="1.50" fill="#8a3de8"/><circle cx="-3.10" cy="0.00" r="1.50" fill="#8a3de8"/><circle cx="1.70" cy="2.60" r="1.50" fill="#8a3de8"/><circle cx="0" cy="0" r="1.70" fill="#5a12c8"/></svg>
<span class="t" style="left:379.60px;top:573px;font-size:12px;line-height:14px;color:#fff;letter-spacing:-0.178px;">Zacros-p...</span>
<svg style="left:452.4px;top:573px;" width="17.6" height="14" viewBox="0 0 17.6 14"><path d="M4.4 0L8.8 2.8L4.4 5.6L0 2.8Z M13.2 0L17.6 2.8L13.2 5.6L8.8 2.8Z M4.4 5.6L8.8 8.4L4.4 11.2L0 8.4Z M13.2 5.6L17.6 8.4L13.2 11.2L8.8 8.4Z M8.8 9.2L12.6 11.6L8.8 14L5 11.6Z" fill="#fff"/></svg>
<div style="left:477.5px;top:572.5px;width:15.5px;height:15px;background:#000;border-radius:2px"></div>
<svg style="left:477.5px;top:572.5px;" width="15.5" height="15" viewBox="0 0 15.5 15"><path d="M.9 2.6C5 .5 10.6 .5 14.7 2.6L13.4 5.4C10.2 4 5.8 4 2.6 5.2Z M3.2 6.6C6 5.7 9.6 5.7 12.6 6.8L11.5 8.9C9.2 8.2 6.6 8.2 4.4 8.8Z M5.2 10.2C6.8 9.7 8.8 9.7 10.4 10.3L8 13.4Z M.9 2.6L3.4 2L9.2 12L8 13.4Z" fill="#1fe3a2"/></svg>
<svg style="left:502px;top:573px;" width="16" height="16" viewBox="0 0 16 16"><path d="M7 .3C9.2 1.6 11.4 2.2 13.7 2.3V7.4C13.7 10.6 10.8 13 7 14.4C3.2 13 .3 10.6 .3 7.4V2.3C2.6 2.2 4.8 1.6 7 .3Z" fill="#fff"/><path d="M7 .3V14.4M.3 7H13.7" stroke="#101010" stroke-width="1"/><circle cx="11" cy="11.2" r="4.2" fill="#1f9d48"/><path d="M9 11.2L10.5 12.7L13 9.8" fill="none" stroke="#fff" stroke-width="1.2"/></svg>
<svg style="left:526.6px;top:572px;" width="13" height="16" viewBox="0 0 13 16"><ellipse cx="6.5" cy="8" rx="6.2" ry="7.8" fill="#0a84ff"/><path d="M3.6 5.2L9.2 10.6L6.5 13V3L9.2 5.4L3.6 10.8" fill="none" stroke="#fff" stroke-width="1.2"/></svg>
<svg style="left:549px;top:572px;" width="16" height="16" viewBox="0 0 16 16"><rect x="0" y="0" width="16" height="16" fill="#8c8c8c"/><rect x="1" y="1" width="14" height="14" fill="#dedede"/><rect x="2.4" y="2.4" width="11.6" height="8.4" fill="#bcbcbc"/><path d="M2.4 11V2.4H14" fill="none" stroke="#10189c" stroke-width="1.5"/><path d="M14.3 2.6V11H2.6" fill="none" stroke="#f4f4f4" stroke-width="1"/><rect x="2" y="12" width="5.4" height="3" fill="#f2f2f2"/><rect x="8.6" y="12" width="5.6" height="3" fill="#f2f2f2"/><path d="M3 14.6H7.4V12.6M9.6 14.6H14.2V12.6" fill="none" stroke="#10189c" stroke-width="1.2"/></svg>
<svg style="left:572.6px;top:573.2px;" width="18" height="13" viewBox="0 0 18 13"><rect x="4.6" y="2.8" width="11.2" height="8.6" fill="none" stroke="#fff" stroke-width="1.3"/><rect x="6.4" y="4.8" width="7.4" height="4.8" fill="#fff"/><rect x="16.2" y="5.4" width="1.4" height="3.4" fill="#fff"/><path d="M1.3 .5V2.8M3.7 .5V2.8" stroke="#fff" stroke-width="1.1"/><path d="M.4 2.8H4.6V4.6C4.6 6.2 3.6 7 2.5 7C1.4 7 .4 6.2 .4 4.6Z" fill="#fff"/><path d="M2.5 7V11.4H5" fill="none" stroke="#fff" stroke-width="1.2"/></svg>
<svg style="left:599px;top:573.6px;" width="15" height="14" viewBox="0 0 15 14"><circle cx="11.9" cy="12" r="1.4" fill="#fff"/><path d="M7.8 13.2C7.8 10.6 9.8 8.4 12.6 8.4" fill="none" stroke="#f2f2f2" stroke-width="1.15"/><path d="M4.4 13.2C4.4 8.6 8 5 12.6 5" fill="none" stroke="#f2f2f2" stroke-width="1.15"/><path d="M1 13.2C1 6.8 6.2 1.6 12.6 1.6" fill="none" stroke="#f2f2f2" stroke-width="1.15"/></svg>
<svg style="left:620.6px;top:572.4px;" width="18" height="15" viewBox="0 0 18 15"><path d="M.6 5.2H3.4L6.8 1.8V13.2L3.4 9.8H.6Z" fill="none" stroke="#fff" stroke-width="1.15" stroke-linejoin="round"/><path d="M9 5.6C10 6.8 10 8.4 9 9.6" fill="none" stroke="#fff" stroke-width="1"/><path d="M11.4 3.6C13.2 5.8 13.2 9.4 11.4 11.6" fill="none" stroke="#b0b0b0" stroke-width="1"/><path d="M13.8 1.6C16.6 4.8 16.6 10.4 13.8 13.6" fill="none" stroke="#6e6e6e" stroke-width="1"/></svg>
<span class="t" style="left:647.60px;top:572px;font-size:12px;line-height:14px;color:#fff;letter-spacing:-1.139px;">ENG</span>
<span class="t" style="left:698.60px;top:564px;font-size:12px;line-height:14px;color:#fff;letter-spacing:-0.686px;">10:52</span>
<span class="t" style="left:683.00px;top:582px;font-size:12px;line-height:14px;color:#fff;letter-spacing:-0.226px;">07/10/2020</span>
<svg style="left:758.7px;top:571.4px;" width="17" height="17" viewBox="0 0 17 17"><path d="M0 0H16.6V13.8H8.4L5.4 16.8V13.8H0Z" fill="#fff"/><path d="M3.2 4.1H13.2M3.2 6.8H13.2M3.2 9.5H10" stroke="#111" stroke-width="1.1"/></svg>
<div style="left:766px;top:578.7px;width:17.5px;height:17.5px;box-sizing:border-box;border-radius:50%;background:#2b2b2b;border:1.4px solid #8a8a8a"></div>
<span class="t" style="left:771.20px;top:580px;font-size:12px;line-height:14px;color:#fff;font-weight:bold;">4</span>
<div style="left:795px;top:560px;width:1px;height:40px;background:#5a5a5a"></div>
</div>
</body></html>
